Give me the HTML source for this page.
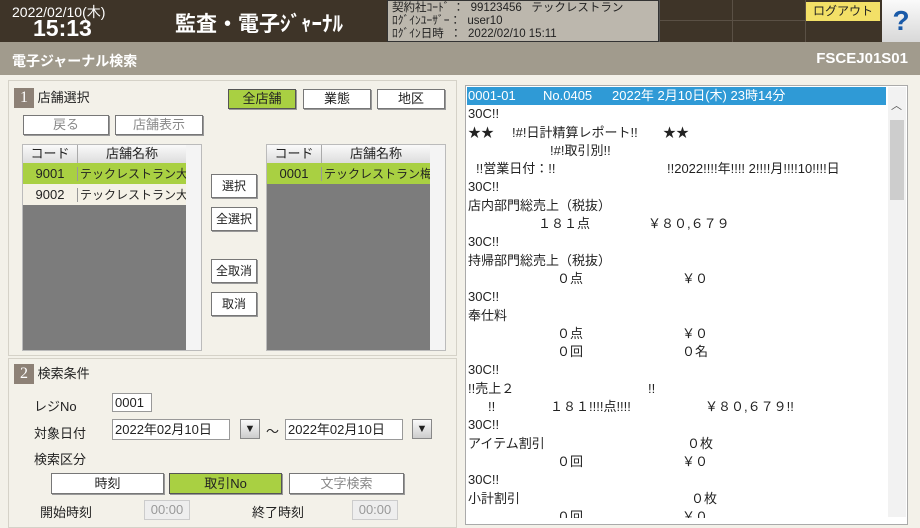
<!DOCTYPE html>
<html><head><meta charset="utf-8"><style>
*{margin:0;padding:0;box-sizing:border-box}
body{width:920px;height:518px;overflow:hidden;background:#f3f1e9;font-family:"Liberation Sans","Noto Sans CJK JP",sans-serif;color:#222;position:relative}
.a{position:absolute}
.btn{position:absolute;background:#fff;border:1px solid #777;box-shadow:1px 1px 0 #999;text-align:center;font-size:13px}
.j div{height:18.3px;line-height:18.3px;white-space:pre;font-size:13px;position:relative}
.j i{font-style:normal;position:absolute;top:0}
.num{display:inline-block;background:#8d8176;color:#fff;width:20px;height:20px;text-align:center;line-height:20px;font-family:"Liberation Serif",serif;font-size:16px}
.row{font-size:12px;line-height:21px;white-space:nowrap;overflow:hidden}
</style></head><body>
<div class="a" style="left:0;top:0;width:920px;height:42px;background:#3e3428"></div>
<div class="a" style="left:12px;top:2px;color:#fff;font-size:14px">2022/02/10(木)</div>
<div class="a" style="left:33px;top:15px;color:#fff;font-size:23px;font-weight:bold">15:13</div>
<div class="a" style="left:175px;top:8px;color:#fff;font-size:21px;font-weight:bold">監査・電子ｼﾞｬｰﾅﾙ</div>
<div class="a" style="left:387px;top:0;width:272px;height:42px;background:#bcb7ad;border:1px solid #333;font-size:11.5px;line-height:13px;padding:1px 4px;color:#222;white-space:pre">契約社ｺｰﾄﾞ ：  99123456   テックレストラン
ﾛｸﾞｲﾝﾕｰｻﾞｰ：  user10
ﾛｸﾞｲﾝ日時  ：  2022/02/10 15:11</div>
<div class="a" style="left:659px;top:0;width:222px;height:42px;border-left:1px solid #555;background:linear-gradient(#5a5045 0 0) 0 20px/100% 1px no-repeat,#3e3428"></div>
<div class="a" style="left:732px;top:0;width:1px;height:42px;background:#5a5045"></div>
<div class="a" style="left:805px;top:0;width:1px;height:42px;background:#5a5045"></div>
<div class="a" style="left:806px;top:2px;width:74px;height:19px;background:#f3e067;font-size:12px;text-align:center;line-height:19px">ログアウト</div>
<div class="a" style="left:882px;top:0;width:38px;height:42px;background:linear-gradient(#fafafa,#d8d8d8);color:#1a5aa8;font-size:28px;font-weight:bold;text-align:center;line-height:42px">?</div>
<div class="a" style="left:0;top:42px;width:920px;height:33px;background:#a19b8d"></div>
<div class="a" style="left:12px;top:51px;color:#fff;font-size:14px;font-weight:bold">電子ジャーナル検索</div>
<div class="a" style="right:12px;top:50px;color:#fff;font-size:15px;font-weight:bold">FSCEJ01S01</div>

<div class="a" style="left:8px;top:80px;width:449px;height:276px;border:1px solid #d5d2c8"></div>
<div class="a" style="left:14px;top:87px;font-size:13px"><span class="num">1</span> 店舗選択</div>
<div class="btn" style="left:228px;top:89px;width:68px;height:20px;background:#a9d042;border-color:#555;line-height:18px">全店舗</div>
<div class="btn" style="left:303px;top:89px;width:68px;height:20px;line-height:18px">業態</div>
<div class="btn" style="left:377px;top:89px;width:68px;height:20px;line-height:18px">地区</div>
<div class="btn" style="left:23px;top:115px;width:86px;height:20px;line-height:18px;color:#888">戻る</div>
<div class="btn" style="left:115px;top:115px;width:88px;height:20px;line-height:18px;color:#888">店舗表示</div>

<div class="a" style="left:22px;top:144px;width:180px;height:207px;background:#7c7c7c;border:1px solid #bbb"></div>
<div class="a" style="left:23px;top:145px;width:163px;height:18px;background:linear-gradient(#fafafa,#ddd);font-size:13px;line-height:18px"><span class="a" style="left:0;width:54px;text-align:center">コード</span><span class="a" style="left:54px;width:109px;text-align:center;border-left:1px solid #aaa">店舗名称</span></div>
<div class="a row" style="left:23px;top:163px;width:163px;height:21px;background:#a9d042"><span style="display:inline-block;width:54px;text-align:center;font-size:13px">9001</span><span style="border-left:1px solid #999;padding-left:2px">テックレストラン大仁</span></div>
<div class="a row" style="left:23px;top:184px;width:163px;height:21px;background:#f4f1e6"><span style="display:inline-block;width:54px;text-align:center;font-size:13px">9002</span><span style="border-left:1px solid #999;padding-left:2px">テックレストラン大峰</span></div>
<div class="a" style="left:186px;top:145px;width:15px;height:205px;background:#f4f4f4"></div>

<div class="btn" style="left:211px;top:174px;width:46px;height:24px;line-height:22px;font-size:12px">選択</div>
<div class="btn" style="left:211px;top:207px;width:46px;height:24px;line-height:22px;font-size:12px">全選択</div>
<div class="btn" style="left:211px;top:259px;width:46px;height:24px;line-height:22px;font-size:12px">全取消</div>
<div class="btn" style="left:211px;top:292px;width:46px;height:24px;line-height:22px;font-size:12px">取消</div>

<div class="a" style="left:266px;top:144px;width:180px;height:207px;background:#7c7c7c;border:1px solid #bbb"></div>
<div class="a" style="left:267px;top:145px;width:163px;height:18px;background:linear-gradient(#fafafa,#ddd);font-size:13px;line-height:18px"><span class="a" style="left:0;width:54px;text-align:center">コード</span><span class="a" style="left:54px;width:109px;text-align:center;border-left:1px solid #aaa">店舗名称</span></div>
<div class="a row" style="left:267px;top:163px;width:163px;height:21px;background:#a9d042"><span style="display:inline-block;width:54px;text-align:center;font-size:13px">0001</span><span style="border-left:1px solid #999;padding-left:2px">テックレストラン梅田</span></div>
<div class="a" style="left:430px;top:145px;width:15px;height:205px;background:#f4f4f4"></div>

<div class="a" style="left:8px;top:358px;width:449px;height:170px;border:1px solid #d5d2c8"></div>
<div class="a" style="left:14px;top:363px;font-size:13px"><span class="num">2</span> 検索条件</div>
<div class="a" style="left:34px;top:396px;font-size:13px">レジNo</div>
<div class="a" style="left:112px;top:393px;width:40px;height:19px;background:#fff;border:1px solid #999;font-size:13px;line-height:17px;padding-left:2px">0001</div>
<div class="a" style="left:34px;top:423px;font-size:13px">対象日付</div>
<div class="a" style="left:112px;top:419px;width:118px;height:21px;background:#fff;border:1px solid #999;font-size:13px;line-height:19px;padding-left:2px">2022年02月10日</div>
<div class="a" style="left:240px;top:419px;width:20px;height:20px;background:linear-gradient(#fafafa,#ccc);border:1px solid #888;font-size:11px;text-align:center;line-height:18px">▼</div>
<div class="a" style="left:266px;top:421px;font-size:13px">～</div>
<div class="a" style="left:285px;top:419px;width:118px;height:21px;background:#fff;border:1px solid #999;font-size:13px;line-height:19px;padding-left:2px">2022年02月10日</div>
<div class="a" style="left:412px;top:419px;width:20px;height:20px;background:linear-gradient(#fafafa,#ccc);border:1px solid #888;font-size:11px;text-align:center;line-height:18px">▼</div>
<div class="a" style="left:34px;top:449px;font-size:13px">検索区分</div>
<div class="btn" style="left:51px;top:473px;width:113px;height:21px;line-height:19px">時刻</div>
<div class="btn" style="left:169px;top:473px;width:113px;height:21px;line-height:19px;background:#a9d042;border-color:#555">取引No</div>
<div class="btn" style="left:289px;top:473px;width:115px;height:21px;line-height:19px;color:#888">文字検索</div>
<div class="a" style="left:40px;top:502px;font-size:13px">開始時刻</div>
<div class="a" style="left:144px;top:500px;width:46px;height:20px;background:#eee;border:1px solid #ccc;font-size:13px;color:#999;text-align:center;line-height:18px">00:00</div>
<div class="a" style="left:252px;top:502px;font-size:13px">終了時刻</div>
<div class="a" style="left:352px;top:500px;width:46px;height:20px;background:#eee;border:1px solid #ccc;font-size:13px;color:#999;text-align:center;line-height:18px">00:00</div>

<div class="a" style="left:465px;top:85px;width:443px;height:440px;background:#fff;border:1px solid #aaa"></div>
<div class="a" style="left:467px;top:87px;width:419px;height:18px;background:#2f9ad6"></div>
<div class="a" style="left:888px;top:87px;width:18px;height:430px;background:#f2f2f2"></div>
<div class="a" style="left:890px;top:120px;width:14px;height:80px;background:#cdcdcd"></div>
<div class="a" style="left:891px;top:97px;font-size:11px;color:#555">︿</div>
<div class="a j" style="left:468px;top:87px;width:419px;height:431px;overflow:hidden">
<div style="color:#fff"><i style="left:0">0001-01</i><i style="left:75px">No.0405</i><i style="left:144px">2022年 2月10日(木) 23時14分</i></div>
<div>30C!!</div>
<div><i style="left:0">★★</i><i style="left:44px">!#!日計精算レポート!!</i><i style="left:195px">★★</i></div>
<div><i style="left:82px">!#!取引別!!</i></div>
<div><i style="left:8px">!!営業日付：!!</i><i style="left:199px">!!2022!!!!年!!!! 2!!!!月!!!!10!!!!日</i></div>
<div>30C!!</div>
<div>店内部門総売上（税抜）</div>
<div><i style="left:70px">１８１点</i><i style="left:180px">￥８０,６７９</i></div>
<div>30C!!</div>
<div>持帰部門総売上（税抜）</div>
<div><i style="left:89px">０点</i><i style="left:214px">￥０</i></div>
<div>30C!!</div>
<div>奉仕料</div>
<div><i style="left:89px">０点</i><i style="left:214px">￥０</i></div>
<div><i style="left:89px">０回</i><i style="left:214px">０名</i></div>
<div>30C!!</div>
<div><i style="left:0">!!売上２</i><i style="left:180px">!!</i></div>
<div><i style="left:20px">!!</i><i style="left:82px">１８１!!!!点!!!!</i><i style="left:237px">￥８０,６７９!!</i></div>
<div>30C!!</div>
<div><i style="left:0">アイテム割引</i><i style="left:219px">０枚</i></div>
<div><i style="left:89px">０回</i><i style="left:214px">￥０</i></div>
<div>30C!!</div>
<div><i style="left:0">小計割引</i><i style="left:223px">０枚</i></div>
<div><i style="left:89px">０回</i><i style="left:214px">￥０</i></div>
</div>
</body></html>
